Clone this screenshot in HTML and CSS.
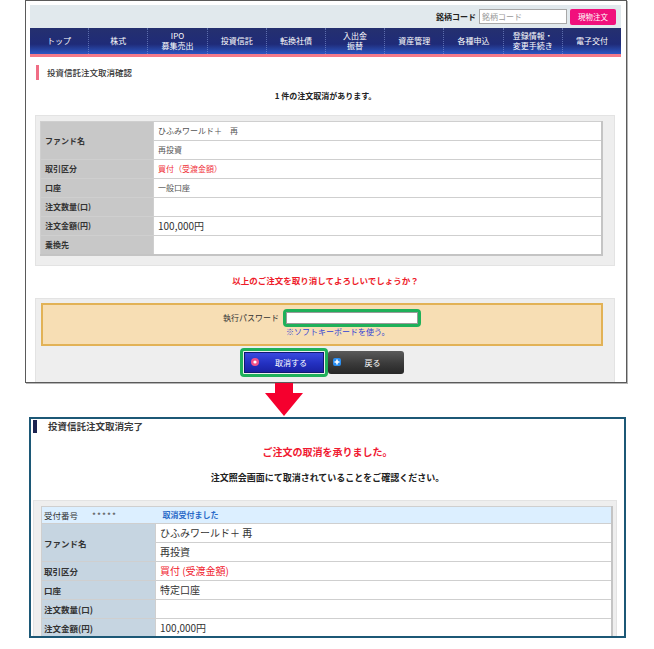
FILE: index.html
```html
<!DOCTYPE html>
<html lang="ja">
<head>
  <meta charset="UTF-8">
  <meta name="viewport" content="width=device-width, initial-scale=1.0">
  <title>投資信託注文取消</title>
  <link rel="stylesheet" href="styles.css">
</head>
<body>
  <div class="shot shot-confirm">
    <div class="site-head">
      <div class="quote-bar">
        <span class="quote-label">銘柄コード</span>
        <input type="text" class="quote-input" placeholder="銘柄コード">
        <button class="btn-order">現物注文</button>
      </div>
      <ul class="gnav">
        <li>トップ</li>
        <li>株式</li>
        <li>IPO<br>募集売出</li>
        <li>投資信託</li>
        <li>転換社債</li>
        <li>入出金<br>振替</li>
        <li>資産管理</li>
        <li>各種申込</li>
        <li>登録情報・<br>変更手続き</li>
        <li>電子交付</li>
      </ul>
    </div>

    <h2 class="page-title">投資信託注文取消確認</h2>
    <p class="lead">1 件の注文取消があります。</p>

    <div class="panel">
      <table class="detail">
        <tr>
          <th rowspan="2">ファンド名</th>
          <td>ひふみワールド＋　再</td>
        </tr>
        <tr><td>再投資</td></tr>
        <tr><th>取引区分</th><td class="red">買付（受渡金額）</td></tr>
        <tr><th>口座</th><td>一般口座</td></tr>
        <tr><th>注文数量(口)</th><td></td></tr>
        <tr><th>注文金額(円)</th><td class="amount">100,000円</td></tr>
        <tr><th>乗換先</th><td></td></tr>
      </table>
    </div>

    <p class="confirm-q">以上のご注文を取り消してよろしいでしょうか？</p>

    <div class="panel panel-auth">
      <div class="auth-box">
        <div class="auth-row">
          <span class="auth-label">執行パスワード</span>
          <div class="auth-field">
            <div class="ring"><input type="password" class="pw-input"></div>
            <div class="auth-hint">※ソフトキーボードを使う。</div>
          </div>
        </div>
      </div>
      <div class="actions">
        <div class="ring ring-btn">
          <button class="btn btn-cancel">
            <svg class="ico" width="8" height="8" viewBox="0 0 8 8"><circle cx="4" cy="4" r="4" fill="#f0508a"/><circle cx="4" cy="4" r="1.6" fill="#fff"/></svg>
            <span>取消する</span>
          </button>
        </div>
        <button class="btn btn-back">
          <svg class="ico" width="8" height="8" viewBox="0 0 8 8"><rect width="8" height="8" rx="2" fill="#2a8ef0"/><path d="M4 1.5v5M1.5 4h5" stroke="#fff" stroke-width="1.6"/></svg>
          <span>戻る</span>
        </button>
      </div>
    </div>
  </div>

  <div class="arrow">
    <svg width="38" height="34" viewBox="0 0 38 34"><rect x="10" y="0" width="18" height="11" fill="#f5002e"/><polygon points="0,10 38,10 19,33" fill="#f5002e"/></svg>
  </div>

  <div class="shot shot-done">
    <h2 class="done-title">投資信託注文取消完了</h2>
    <p class="done-msg">ご注文の取消を承りました。</p>
    <p class="done-note">注文照会画面にて取消されていることをご確認ください。</p>

    <div class="panel panel-done">
      <table class="detail detail-done">
        <tr class="receipt">
          <th>受付番号<span class="stars">*****</span></th>
          <td>取消受付ました</td>
        </tr>
        <tr>
          <th rowspan="2">ファンド名</th>
          <td>ひふみワールド＋ 再</td>
        </tr>
        <tr><td>再投資</td></tr>
        <tr><th>取引区分</th><td class="red">買付 (受渡金額)</td></tr>
        <tr><th>口座</th><td>特定口座</td></tr>
        <tr><th>注文数量(口)</th><td></td></tr>
        <tr><th>注文金額(円)</th><td>100,000円</td></tr>
      </table>
    </div>
  </div>
</body>
</html>
```

FILE: styles.css
```css
:root {
  --navy: #1f2b78;
  --pink: #f47a88;
  --red: #ee1c2a;
  --green: #1fb05a;
  --cell-border: #cfcfcf;
  --text: #333333;
}

* {
  box-sizing: border-box;
}

body {
  margin: 0;
  width: 654px;
  background: #ffffff;
  color: var(--text);
  font-family: "Noto Sans CJK JP", "Noto Sans", sans-serif;
}

h2, p, ul {
  margin: 0;
  padding: 0;
}

/* ---- top screenshot ---- */

.shot-confirm {
  margin-left: 25px;
  width: 602px;
  height: 383px;
  border: 1px solid #5a5a5a;
  box-shadow: 1px 1px 0 #b5b5b5;
  padding: 4px 5px 0 4px;
  overflow: hidden;
}

.quote-bar {
  height: 23px;
  background: #e1e9ed;
  display: flex;
  justify-content: flex-end;
  align-items: center;
  padding-right: 5px;
}

.quote-label {
  font-size: 8px;
  font-weight: bold;
  color: #222;
  margin-right: 3px;
}

.quote-input {
  width: 88px;
  height: 15px;
  border: 1px solid #a8a8a8;
  padding: 0 2px;
  font-family: inherit;
  font-size: 8px;
  color: #444;
}

.quote-input::placeholder {
  color: #999;
}

.btn-order {
  width: 46px;
  height: 16px;
  margin-left: 3px;
  border: none;
  border-radius: 2px;
  background: #f1107c;
  color: #fff;
  font-family: inherit;
  font-size: 7.5px;
  padding: 0;
}

.gnav {
  list-style: none;
  display: flex;
  height: 29px;
  background: linear-gradient(to bottom, #25306f 0%, #1f2b78 62%, #2c56c2 100%);
  border-bottom: 3px solid var(--pink);
}

.gnav li {
  flex: 1;
  display: flex;
  align-items: center;
  justify-content: center;
  text-align: center;
  color: #fff;
  font-size: 8px;
  line-height: 10px;
  border-left: 1px dotted rgba(140, 160, 220, 0.55);
}

.gnav li:first-child {
  border-left: none;
}

.page-title {
  margin: 8px 0 0 6px;
  height: 15px;
  border-left: 3px solid #f06d85;
  padding-left: 8px;
  font-size: 8.5px;
  font-weight: 500;
  line-height: 15px;
  color: #333;
}

.lead {
  margin-top: 10px;
  text-align: center;
  font-size: 8px;
  font-weight: bold;
  line-height: 12px;
  color: #222;
}

.panel {
  margin: 13px 6px 0 5px;
  background: #eeeeee;
  border: 1px solid #e3e3e3;
  padding: 5px 11px 9px 4px;
}

.detail {
  width: 100%;
  border-collapse: collapse;
  background: #fff;
  border-right: 2px solid #c4c4c4;
  border-bottom: 2px solid #c4c4c4;
}

.detail th,
.detail td {
  height: 19px;
  padding: 0 0 0 4px;
  border: 1px solid var(--cell-border);
  font-size: 8px;
  line-height: 12px;
  text-align: left;
  vertical-align: middle;
}

.detail th {
  width: 113px;
  background: #c8c8c8;
  font-weight: bold;
  color: #333;
}

.detail td {
  color: #555;
}

.detail td.red {
  color: #f0303a;
}

.detail td.amount {
  font-size: 10px;
  color: #333;
}

.confirm-q {
  margin-top: 8px;
  text-align: center;
  font-size: 8.5px;
  font-weight: bold;
  line-height: 12px;
  color: var(--red);
}

.panel-auth {
  margin-top: 12px;
  padding: 4px 11px 5px 5px;
}

.auth-box {
  height: 43px;
  border: 2px solid #e2b256;
  background: #f7deb4;
  padding-top: 4px;
}

.auth-row {
  display: flex;
  justify-content: center;
  align-items: flex-start;
  gap: 4px;
}

.auth-label {
  font-size: 8px;
  line-height: 18px;
  color: #333;
}

.ring {
  border: 3px solid var(--green);
  border-radius: 4px;
}

.pw-input {
  display: block;
  width: 132px;
  height: 12px;
  border: 1px solid #9a9a9a;
  background: #fff;
  margin: 0;
}

.auth-hint {
  margin-left: 3px;
  font-size: 8px;
  line-height: 10px;
  color: #3142d4;
}

.actions {
  margin-top: 2px;
  display: flex;
  justify-content: center;
  align-items: center;
}

.ring-btn {
  padding: 1px;
}

.btn {
  display: flex;
  align-items: center;
  border: none;
  padding: 0 0 0 6px;
  font-family: inherit;
  font-size: 8px;
  color: #fff;
}

.btn span {
  flex: 1;
  text-align: center;
}

.btn-cancel {
  width: 80px;
  height: 21px;
  background: linear-gradient(to bottom, #3a4ae0 0%, #2330c0 55%, #1a22a4 100%);
  border: 1px solid #101870;
}

.btn-back {
  width: 76px;
  height: 23px;
  padding-left: 5px;
  border-radius: 3px;
  background: linear-gradient(to bottom, #5a5a5a 0%, #3a3a3a 55%, #262626 100%);
}

.ico {
  flex: none;
}

.arrow {
  margin-left: 265px;
  height: 34px;
}

.arrow svg {
  display: block;
}

/* ---- bottom screenshot ---- */

.shot-done {
  margin-left: 29px;
  width: 597px;
  height: 221px;
  border: 2px solid #1c5876;
  overflow: hidden;
}

.done-title {
  margin: 1px 0 0 2px;
  height: 13px;
  border-left: 4px solid #1c2450;
  padding-left: 11px;
  font-size: 9.5px;
  font-weight: bold;
  line-height: 13px;
  color: #3a3a3a;
}

.done-msg {
  margin-top: 13px;
  text-align: center;
  font-size: 10px;
  font-weight: bold;
  line-height: 12px;
  color: #f01830;
}

.done-note {
  margin-top: 14px;
  text-align: center;
  font-size: 9px;
  font-weight: bold;
  line-height: 12px;
  color: #222;
}

.panel-done {
  margin: 16px 7px 0 2px;
  padding: 5px 3px 0 7px;
  border-bottom: none;
}

.detail-done th {
  width: 114px;
  background: #c6d5e1;
  font-size: 8.5px;
  padding-left: 2px;
}

.detail-done td {
  font-size: 10px;
  color: #333;
}

.detail-done td.red {
  color: #f0202c;
}

.detail-done .receipt th,
.detail-done .receipt td {
  height: 17px;
  background: #dcefff;
}

.detail-done .receipt th {
  border-right: none;
  font-weight: normal;
}

.detail-done .receipt td {
  border-left: none;
  font-size: 8px;
  font-weight: bold;
  color: #2a6ac8;
  padding-left: 7px;
}

.stars {
  margin-left: 14px;
  letter-spacing: 1px;
  font-weight: normal;
  color: #555;
}
```
